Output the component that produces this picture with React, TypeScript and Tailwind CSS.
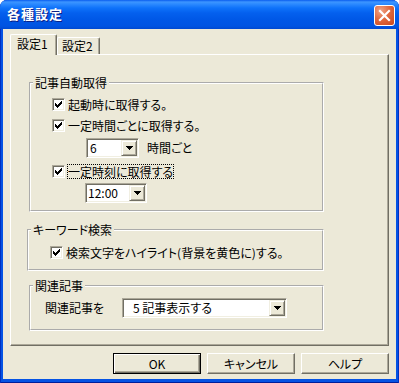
const sunken =
  'border border-t-[#ACA899] border-l-[#ACA899] border-r-white border-b-white shadow-[inset_1px_1px_0_#716F64,inset_-1px_-1px_0_#F1EFE2]';
const raised =
  'border border-t-white border-l-white border-r-[#716F64] border-b-[#716F64] shadow-[inset_-1px_-1px_0_#ACA899]';

function CheckBox() {
  return (
    <span className={`flex h-[13px] w-[13px] shrink-0 items-center justify-center bg-white p-[1px] ${sunken}`}>
      <svg width="7" height="7" viewBox="0 0 7 7" shapeRendering="crispEdges">
        <path
          d="M6 0h1v1H6zM5 1h2v1H5zM0 2h1v1H0zM4 2h3v1H4zM0 3h2v1H0zM3 3h3v1H3zM0 4h5v1H0zM1 5h3v1H1zM2 6h1v1H2z"
          fill="#000"
        />
      </svg>
    </span>
  );
}

function CheckRow({ label, focused, className }: { label: string; focused?: boolean; className: string }) {
  return (
    <div className={`flex h-[15px] items-center gap-[2px] ${className}`}>
      <CheckBox />
      <span
        className={`border leading-[13px] whitespace-nowrap ${
          focused ? 'border-dotted border-black' : 'border-transparent'
        }`}
      >
        {label}
      </span>
    </div>
  );
}

function Combo({ value, className, textClass }: { value: string; className: string; textClass: string }) {
  return (
    <div className={`flex h-[20px] bg-white p-[1px] ${sunken} ${className}`}>
      <span className={`flex-1 leading-[16px] whitespace-nowrap ${textClass}`}>{value}</span>
      <span className="flex w-[16px] items-center justify-center border border-t-[#F1EFE2] border-l-[#F1EFE2] border-r-[#716F64] border-b-[#716F64] bg-[#ECE9D8] shadow-[inset_1px_1px_0_#fff,inset_-1px_-1px_0_#ACA899]">
        <svg width="7" height="4" viewBox="0 0 7 4" shapeRendering="crispEdges">
          <path d="M0 0h7v1H0zM1 1h5v1H1zM2 2h3v1H2zM3 3h1v1H3z" fill="#000" />
        </svg>
      </span>
    </div>
  );
}

function Group({ title, className, children }: { title: string; className: string; children: React.ReactNode }) {
  return (
    <fieldset
      className={`min-w-0 border-2 border-white [--tw-border-style:groove] [border-style:groove] ${className}`}
    >
      <legend className="ml-[2px] px-[2px] leading-[14px]">{title}</legend>
      {children}
    </fieldset>
  );
}

export default function App() {
  return (
    <div className="flex h-[383px] w-[399px] flex-col overflow-hidden rounded-t-[7px] bg-[#0553E4] font-['Noto_Sans_CJK_JP',sans-serif] text-[12px] leading-[14px] text-black [font-feature-settings:'palt'] shadow-[inset_1px_0_0_#0030C0,inset_-1px_0_0_#0030C0,inset_0_-1px_0_#001E9A]">
      {/* title bar */}
      <div className="flex h-[29px] shrink-0 items-start justify-between bg-[linear-gradient(to_bottom,#0A5DEE_0px,#3D95FF_2px,#2C8AFF_4px,#0E72FA_8px,#0460EE_13px,#0057E6_20px,#0054E2_26px,#0049D2_29px)] pl-[7px] pr-[4px]">
        <span className="mt-[7px] text-[13px] font-bold tracking-[1px] text-white [font-feature-settings:normal] [text-shadow:1px_1px_0_#0B2087]">
          各種設定
        </span>
        <button className="mt-[5px] flex h-[21px] w-[21px] items-center justify-center rounded-[3px] border border-white bg-[radial-gradient(circle_at_30%_25%,#F0A487_0%,#E0693F_45%,#C9461C_100%)]">
          <svg width="19" height="19" viewBox="0 0 19 19">
            <path d="M5 5l9 9M14 5l-9 9" stroke="#fff" strokeWidth="2.2" strokeLinecap="square" />
          </svg>
        </button>
      </div>

      {/* body */}
      <div className="mx-[3px] mb-[4px] flex flex-1 flex-col bg-[#ECE9D8]">
        {/* tabs */}
        <div className="mx-[7px] mt-[5px] flex h-[20px] items-end">
          <div className="relative z-10 -mb-[1px] h-[21px] w-[47px] rounded-t-[2px] border-t border-l border-r border-t-white border-l-white border-r-[#716F64] bg-[#ECE9D8] pl-[6px] pt-[2px] shadow-[inset_-1px_0_0_#ACA899]">
            設定1
          </div>
          <div className="h-[17px] w-[43px] rounded-t-[2px] border-t border-l border-r border-t-white border-l-white border-r-[#716F64] pl-[4px] pt-[1px] shadow-[inset_-1px_0_0_#ACA899]">
            設定2
          </div>
        </div>

        {/* panel */}
        <div className={`mx-[7px] flex h-[292px] flex-col ${raised}`}>
          <Group title="記事自動取得" className="ml-[18px] mt-[21px] h-[136px] w-[295px]">
            <CheckRow label="起動時に取得する。" className="ml-[21px] mt-[7px]" />
            <CheckRow label="一定時間ごとに取得する。" className="ml-[21px] mt-[6px]" />
            <div className="ml-[55px] mt-[5px] flex items-center">
              <Combo value="6" className="w-[53px]" textClass="pl-[2px]" />
              <span className="ml-[8px]">時間ごと</span>
            </div>
            <CheckRow label="一定時刻に取得する" focused className="ml-[21px] mt-[6px]" />
            <div className="ml-[54px] mt-[4px] flex">
              <Combo value="12:00" className="w-[62px]" textClass="pl-[1px]" />
            </div>
          </Group>

          <Group title="キーワード検索" className="ml-[16px] mt-[11px] h-[48px] w-[297px]">
            <CheckRow label="検索文字をハイライト(背景を黄色に)する。" className="ml-[21px] mt-[8px]" />
          </Group>

          <Group title="関連記事" className="ml-[18px] mt-[8px] h-[52px] w-[295px]">
            <div className="ml-[14px] mt-[5px] flex items-center">
              <span className="w-[77px]">関連記事を</span>
              <Combo value="5 記事表示する" className="w-[165px]" textClass="pl-[9px]" />
            </div>
          </Group>
        </div>

        {/* buttons */}
        <div className="mr-[7px] mt-[7px] flex justify-end gap-[6px]">
          <button className="h-[21px] w-[88px] border border-black bg-[#ECE9D8] shadow-[inset_1px_1px_0_#fff,inset_-1px_-1px_0_#716F64,inset_-2px_-2px_0_#ACA899]">
            OK
          </button>
          <button className={`h-[21px] w-[88px] bg-[#ECE9D8] ${raised}`}>キャンセル</button>
          <button className={`h-[21px] w-[88px] bg-[#ECE9D8] ${raised}`}>ヘルプ</button>
        </div>
      </div>
    </div>
  );
}
